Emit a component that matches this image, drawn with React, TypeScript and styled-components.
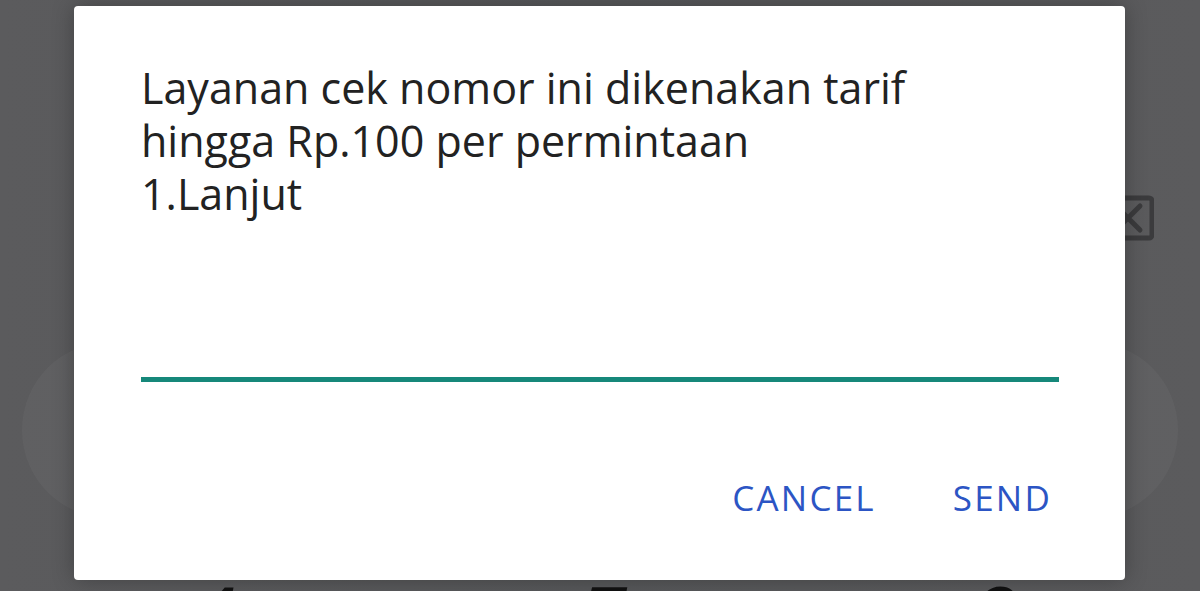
import { createGlobalStyle, styled } from 'styled-components';

const GlobalStyle = createGlobalStyle`
  html,
  body {
    margin: 0;
    padding: 0;
    background: #58595b;
  }

  * {
    box-sizing: border-box;
  }
`;

const MESSAGE = ['Layanan cek nomor ini dikenakan tarif', 'hingga Rp.100 per permintaan', '1.Lanjut'];
const DIGITS = ['4', '5', '6'];

// only the right part shows from under the dialog
const BackspaceIcon = () => (
  <svg width="76" height="46" viewBox="0 0 76 46" fill="none">
    <path
      d="M22 3 H71 a3 3 0 0 1 3 3 V40 a3 3 0 0 1 -3 3 H22 L3 23 Z"
      stroke="#3b3b3d"
      strokeWidth="5"
      strokeLinejoin="round"
    />
    <path d="M38 11 L62 35 M62 11 L38 35" stroke="#3b3b3d" strokeWidth="5" strokeLinecap="round" />
  </svg>
);

const App = () => {
  return (
    <S.Screen>
      <GlobalStyle />
      <S.Dialer>
        <S.DisplayRow>
          <BackspaceIcon />
        </S.DisplayRow>
        <S.KeyRow>
          <S.KeyCircle />
          <S.KeyCircle />
          <S.KeyCircle />
        </S.KeyRow>
        <S.DigitRow>
          {DIGITS.map((digit) => (
            <S.Digit key={digit}>{digit}</S.Digit>
          ))}
        </S.DigitRow>
      </S.Dialer>

      <S.Dialog>
        <S.Message>
          {MESSAGE.map((line) => (
            <span key={line}>{line}</span>
          ))}
        </S.Message>
        <S.Input />
        <S.Actions>
          <S.ActionButton type="button">CANCEL</S.ActionButton>
          <S.ActionButton type="button">SEND</S.ActionButton>
        </S.Actions>
      </S.Dialog>
    </S.Screen>
  );
};

const S = {
  Screen: styled.div`
    position: relative;
    overflow: hidden;

    width: 1200px;
    height: 591px;

    background: linear-gradient(90deg, #5b5b5d 0%, #57585a 50%, #5b5b5d 100%);
  `,

  Dialer: styled.div`
    display: flex;
    flex-direction: column;

    width: 100%;
    padding-top: 195px;
  `,

  DisplayRow: styled.div`
    display: flex;
    justify-content: flex-end;

    height: 46px;
    padding-right: 46px;
  `,

  KeyRow: styled.div`
    display: grid;
    grid-template-columns: repeat(3, 176px);
    justify-content: space-between;

    margin-top: 101px;
    padding: 0 22px;
  `,

  KeyCircle: styled.div`
    width: 176px;
    height: 176px;
    border-radius: 50%;

    background: rgba(255, 255, 255, 0.035);
  `,

  DigitRow: styled.div`
    display: grid;
    grid-template-columns: repeat(3, 80px);
    gap: 0 310px;

    margin-top: 56px;
    padding-left: 172px;
  `,

  Digit: styled.span`
    color: #111;
    font-family: 'Liberation Sans', Arial, sans-serif;
    font-size: 90px;
    font-style: italic;
    line-height: 1;
    text-align: center;
  `,

  Dialog: styled.div`
    position: absolute;
    top: 6px;
    left: 74px;

    display: flex;
    flex-direction: column;

    width: 1051px;
    height: 574px;
    padding: 55px 66px 0 67px;
    border-radius: 4px;

    background: #fff;
    box-shadow: 0 0 22px rgba(0, 0, 0, 0.28);
  `,

  Message: styled.p`
    display: flex;
    flex-direction: column;

    margin: 0;

    color: #222;
    font-family: 'Open Sans', 'Noto Sans', sans-serif;
    font-size: 43px;
    line-height: 53px;
  `,

  Input: styled.div`
    width: 100%;
    height: 5px;
    margin-top: 157px;

    background: #16887a;
  `,

  Actions: styled.div`
    display: flex;
    gap: 77px;
    justify-content: flex-end;

    margin-top: 93px;
    padding-right: 7px;
  `,

  ActionButton: styled.button`
    padding: 0;
    border: none;

    background: none;
    color: #2c55c4;
    font-family: 'Open Sans', 'Noto Sans', sans-serif;
    font-size: 35px;
    letter-spacing: 2.2px;
    line-height: 46px;
  `,
};

export default App;
